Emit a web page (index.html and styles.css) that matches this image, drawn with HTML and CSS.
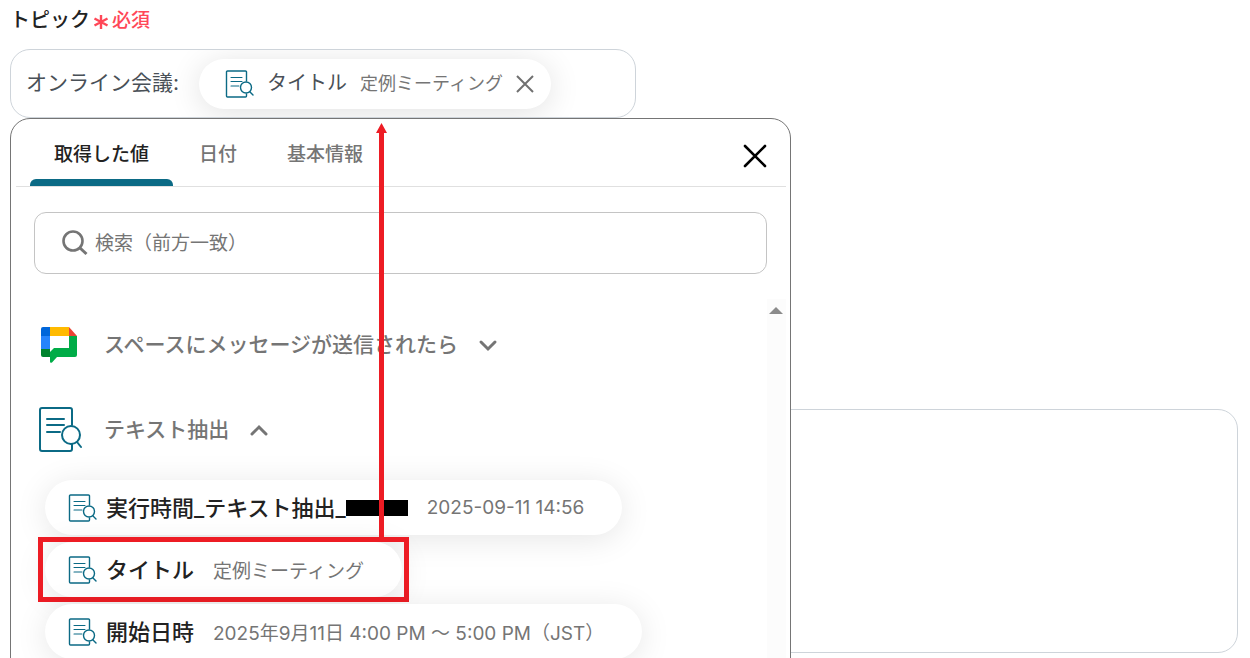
FILE: index.html
```
<!DOCTYPE html>
<html lang="ja">
<head>
  <meta charset="UTF-8" />
  <meta name="viewport" content="width=device-width, initial-scale=1.0"/>
  <title>トピック</title>
  <link rel="stylesheet" href="styles.css">
</head>
<body>
  <svg class="symbols" aria-hidden="true">
    <symbol id="icon-extract" viewBox="0 0 44 46">
      <g fill="none" stroke="#0b6a85" stroke-width="2" stroke-linecap="round" stroke-linejoin="round">
        <path d="M34 18V3a2 2 0 0 0-2-2H4a2 2 0 0 0-2 2v39a2 2 0 0 0 2 2h28a2 2 0 0 0 2-2v-5"/>
        <path d="M9 12h17M9 18h17M9 25h13"/>
        <circle cx="33" cy="28" r="9"/>
        <path d="M39 35l4 5"/>
      </g>
    </symbol>
    <symbol id="icon-extract-small" viewBox="0 0 29 30">
      <g fill="none" stroke="#0b6a85" stroke-linecap="round" stroke-linejoin="round">
        <path stroke-width="1.4" d="M21.5 12V3a1 1 0 0 0-1-1h-18a1 1 0 0 0-1 1v24a1 1 0 0 0 1 1h18a1 1 0 0 0 1-1v-2"/>
        <path stroke-width="1.1" d="M6 8.500h11M6 12.500h11M6 17h8"/>
        <circle stroke-width="1.400" cx="21" cy="18.500" r="5.500"/>
        <path stroke-width="1.400" d="M25 23l3 3"/>
      </g>
    </symbol>
  </svg>

  <form class="page">
    <div class="label-row">
      <span class="label" id="topicLabel">トピック</span>
      <span class="required">
        <svg width="16" height="16" viewBox="0 0 16 16"><path d="M8 1v14M1.500 4.500l13 7M14.500 4.500l-13 7" stroke="#ff4757" stroke-width="2.400" fill="none"/></svg>
        必須
      </span>
    </div>

    <div class="topic">
      <div class="topic-input" role="group" aria-labelledby="topicLabel">
        <span class="topic-text">オンライン会議:</span>
        <span class="chip">
          <svg class="icon-small"><use href="#icon-extract-small"/></svg>
          <span class="chip-name">タイトル</span>
          <span class="chip-value">定例ミーティング</span>
          <button type="button" class="icon-button" aria-label="削除">
            <svg width="20" height="20" viewBox="0 0 20 20"><path d="M2 2l16 16M18 2L2 18" stroke="#707070" stroke-width="2" fill="none"/></svg>
          </button>
        </span>
      </div>

      <div class="panel">
        <div class="panel-header">
          <div class="tabs" role="tablist">
            <button type="button" class="tab active" role="tab" aria-selected="true">取得した値</button>
            <button type="button" class="tab" role="tab">日付</button>
            <button type="button" class="tab" role="tab">基本情報</button>
          </div>
          <button type="button" class="icon-button" aria-label="閉じる">
            <svg width="24" height="24" viewBox="0 0 24 24"><path d="M2 2l20 20M22 2L2 22" stroke="#000" stroke-width="2.600" stroke-linecap="round" fill="none"/></svg>
          </button>
        </div>

        <label class="search">
          <svg width="26" height="26" viewBox="0 0 26 26"><circle cx="11" cy="11" r="9.500" fill="none" stroke="#757575" stroke-width="2.600"/><path d="M18 18l6.500 6" stroke="#757575" stroke-width="3"/></svg>
          <input type="text" placeholder="検索（前方一致）" aria-label="検索">
        </label>

        <div class="results">
          <div class="results-list">
            <button type="button" class="group">
              <span class="group-icon">
                <svg class="icon-chat" viewBox="0 0 38 38">
                  <path fill="#0066da" d="M3 1h7v9H1V3a2 2 0 0 1 2-2z"/>
                  <path fill="#2684fc" d="M1 10h9v13H1z"/>
                  <path fill="#00832d" d="M1 23h9v8H3a2 2 0 0 1-2-2z"/>
                  <path fill="#ffba00" d="M10 1h19v9H10z"/>
                  <path fill="#ea4335" d="M29 1l8 9h-8z"/>
                  <path fill="#00ac47" d="M29 10h8v19a2 2 0 0 1-2 2H17l-5 5.500q-2 1-2-1V26l4-4h15z"/>
                </svg>
              </span>
              <span class="group-name">スペースにメッセージが送信されたら</span>
              <svg width="20" height="14" viewBox="0 0 20 14"><path d="M3 4l7 7 7-7" stroke="#757575" stroke-width="3" stroke-linecap="round" fill="none"/></svg>
            </button>

            <button type="button" class="group">
              <span class="group-icon"><svg class="icon-large"><use href="#icon-extract"/></svg></span>
              <span class="group-name">テキスト抽出</span>
              <svg width="20" height="14" viewBox="0 0 20 14"><path d="M3 11l7-7 7 7" stroke="#757575" stroke-width="3" stroke-linecap="round" fill="none"/></svg>
            </button>

            <div class="items">
              <button type="button" class="item">
                <svg class="icon-small"><use href="#icon-extract-small"/></svg>
                <span class="item-name">実行時間_テキスト抽出_<span class="masked"></span></span>
                <span class="item-value">2025-09-11 14:56</span>
              </button>
              <button type="button" class="item highlighted">
                <svg class="icon-small"><use href="#icon-extract-small"/></svg>
                <span class="item-name">タイトル</span>
                <span class="item-value">定例ミーティング</span>
              </button>
              <button type="button" class="item">
                <svg class="icon-small"><use href="#icon-extract-small"/></svg>
                <span class="item-name">開始日時</span>
                <span class="item-value">2025年9月11日 4:00 PM ～ 5:00 PM（JST）</span>
              </button>
            </div>
          </div>
          <div class="scrollbar"></div>
        </div>
      </div>
    </div>

    <textarea class="description" aria-label="説明"></textarea>

    <!-- arrow from the selected value up to the topic field -->
    <svg class="arrow" width="11" height="415" viewBox="0 0 11 415"><path fill="#ed1c24" d="M5.500 0L11 10H8v405H3V10H0z"/></svg>
  </form>
</body>
</html>
```
FILE: styles.css
```
* {
  box-sizing: border-box;
}

body {
  margin: 0;
  background: #fff;
  color: #222;
  font-family: Inter, "Noto Sans CJK JP", sans-serif;
}

button, input, textarea {
  font-family: inherit;
}

button {
  padding: 0;
  border: none;
  background: none;
  cursor: pointer;
}

svg {
  flex: none;
}

.symbols {
  display: none;
}

.page {
  position: relative;
  height: 100vh;
  padding: 0 12px 0 10px;
  overflow: hidden;
}

.label-row {
  display: flex;
  align-items: center;
  gap: 3px;
  height: 49px;
  padding-bottom: 12px;
  font-weight: 500;
}

.label {
  font-size: 20px;
}

.required {
  display: flex;
  align-items: center;
  gap: 3px;
  font-size: 19px;
  color: #ff4757;
}

.required svg {
  margin-top: 6px;
}

.topic-input {
  display: flex;
  align-items: center;
  gap: 20px;
  width: 51%;
  height: 69px;
  padding-left: 15px;
  border: 1px solid #ced4da;
  border-radius: 20px;
  overflow: hidden;
  font-size: 21px;
  color: #495057;
}

.topic-text {
  padding-bottom: 6px;
}

.chip {
  display: flex;
  align-items: center;
  height: 50px;
  padding: 0 16px 0 26px;
  border-radius: 25px;
  background: #fff;
  box-shadow: 0 4px 32px rgba(0, 0, 0, 0.12);
}

.icon-small {
  width: 29px;
  height: 30px;
}

.icon-large {
  width: 44px;
  height: 46px;
}

.icon-chat {
  width: 38px;
  height: 38px;
  margin-left: 2px;
}

.chip-name {
  margin: 0 13px;
  padding-bottom: 4px;
  font-size: 20px;
}

.chip-value {
  margin-right: 12px;
  padding-bottom: 4px;
  font-size: 18px;
  color: #757575;
}

.icon-button {
  display: flex;
}

.panel {
  position: absolute;
  top: 118px;
  left: 10px;
  bottom: -20px;
  width: 781px;
  padding: 0 4px 0 5px;
  border: 1px solid #757575;
  border-radius: 20px;
  background: #fff;
  overflow: hidden;
}

.panel-header {
  display: flex;
  justify-content: space-between;
  height: 68px;
  padding: 0 19px 0 14px;
  border-bottom: 1px solid #e0e0e0;
}

.panel-header .icon-button {
  align-items: center;
  padding-top: 6px;
}

.tabs {
  display: flex;
  gap: 2px;
}

.tab {
  position: relative;
  padding: 0 24px;
  border-top: 6px solid transparent;
  border-bottom: 7px solid transparent;
  font-size: 19px;
  font-weight: 500;
  color: #757575;
}

.tab.active {
  color: #222;
}

.tab.active::after {
  content: "";
  position: absolute;
  left: 0;
  right: 0;
  bottom: -7px;
  height: 7px;
  border-radius: 6px 6px 0 0;
  background: #0b6a85;
}

.search {
  display: flex;
  align-items: center;
  gap: 7px;
  height: 62px;
  margin: 25px 19px 25px 18px;
  padding: 0 27px;
  border: 1px solid #c4c4c4;
  border-radius: 12px;
}

.search input {
  flex: 1;
  border: none;
  outline: none;
  background: none;
  font-size: 19px;
  padding: 0;
}

.search input::placeholder {
  color: #757575;
}

.results {
  display: flex;
}

.results-list {
  flex: 1;
  padding: 3px 0 0 18px;
}

.group {
  display: flex;
  align-items: center;
  height: 85px;
  padding-left: 4px;
  font-size: 21px;
  font-weight: 500;
  color: #757575;
}

.group-icon {
  display: flex;
  width: 48px;
  margin-right: 18px;
}

.group-name {
  margin-right: 20px;
  padding-bottom: 4px;
}

.items {
  display: flex;
  flex-direction: column;
  align-items: flex-start;
  gap: 7px;
  padding: 8px 11px;
}

.item {
  position: relative;
  display: flex;
  align-items: center;
  height: 55px;
  padding: 0 38px 0 23px;
  border-radius: 28px;
  background: #fff;
  box-shadow: 0 4px 32px rgba(0, 0, 0, 0.1);
  white-space: nowrap;
}

.item-name {
  display: flex;
  align-items: center;
  margin: 0 19px 0 9px;
  padding-bottom: 4px;
  font-size: 22px;
  font-weight: 500;
  color: #222;
}

.item-value {
  font-size: 19px;
  color: #757575;
}

.masked {
  width: 62px;
  height: 16px;
  margin-top: 4px;
  background: #000;
}

.highlighted::after {
  content: "";
  position: absolute;
  inset: -5px -7px;
  border: 5px solid #ed1c24;
}

.scrollbar {
  width: 19px;
  background: #fcfcfc;
}

.scrollbar::before {
  content: "";
  display: block;
  margin: 8px auto 0 2px;
  width: 0;
  border: 7px solid transparent;
  border-top: none;
  border-bottom-color: #8b8b8b;
}

.description {
  display: block;
  width: 100%;
  height: 244px;
  margin-top: 291px;
  border: 1px solid #ced4da;
  border-radius: 20px;
  resize: none;
}

.arrow {
  position: absolute;
  top: 123px;
  left: 376px;
}
```
